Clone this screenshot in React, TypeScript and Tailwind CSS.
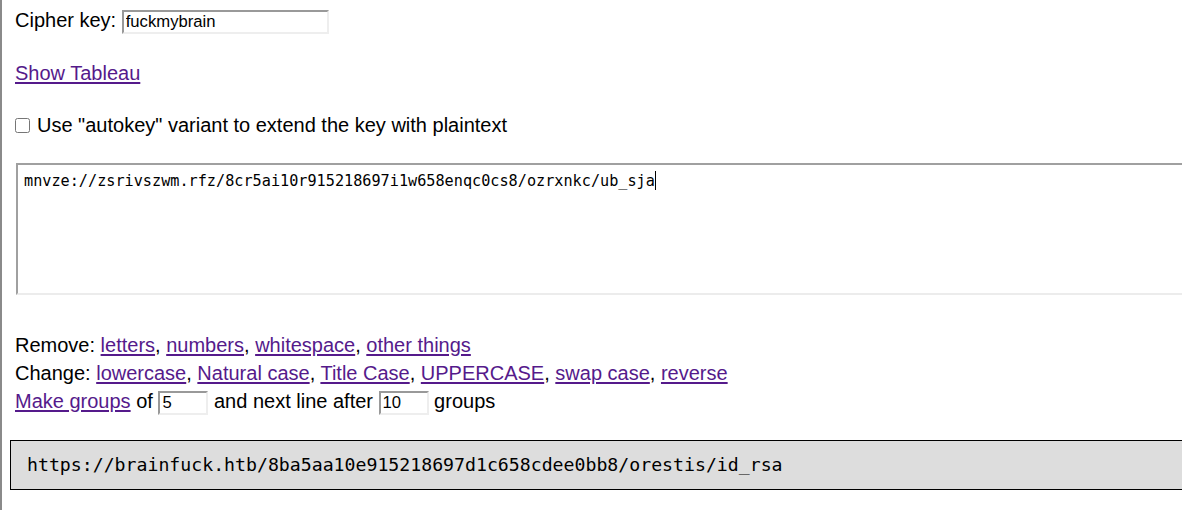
import React from "react";

const sans = "font-['Liberation_Sans',Arial,sans-serif]";
const mono = "font-['DejaVu_Sans_Mono','Liberation_Mono',monospace]";

const Lnk: React.FC<{ children: React.ReactNode }> = ({ children }) => (
  <a href="#" className="text-[#551a8b] underline underline-offset-[2px] decoration-[1.5px]">
    {children}
  </a>
);

const SmallInput: React.FC<{ value: string; width: string }> = ({ value, width }) => (
  <input
    readOnly
    value={value}
    className={`${width} h-[24px] px-[2px] align-baseline text-[16.67px] text-black bg-white border-2 border-t-[#999] border-l-[#999] border-b-[#eee] border-r-[#eee] outline-none ${sans}`}
  />
);

export default function App() {
  const removeOps = ["letters", "numbers", "whitespace", "other things"];
  const changeOps = ["lowercase", "Natural case", "Title Case", "UPPERCASE", "swap case", "reverse"];

  return (
    <div className={`h-[510px] w-full overflow-hidden bg-white border-l-2 border-[#8a8a8a] pl-[13px] text-black text-[20px] ${sans}`}>
      {/* key */}
      <div className="mt-[9px] h-[25px] leading-[23px]">
        <span>Cipher key: </span>
        <SmallInput value="fuckmybrain" width="w-[207px]" />
      </div>

      <div className="mt-[28px] h-[23px] leading-[23px]">
        <Lnk>Show Tableau</Lnk>
      </div>

      {/* autokey */}
      <div className="mt-[29px] h-[23px] flex items-center">
        <input type="checkbox" className="m-0 w-[15px] h-[15px]" />
        <span className="ml-[7px] leading-[23px]">Use "autokey" variant to extend the key with plaintext</span>
      </div>

      {/* cipher text */}
      <div
        className={`mt-[26px] ml-px w-[1200px] h-[132px] border-2 border-t-[#a0a0a0] border-l-[#a0a0a0] border-b-[#ececec] border-r-[#ececec] px-[6px] pt-[6px] text-[15.2px] leading-[20px] ${mono}`}
      >
        mnvze://zsrivszwm.rfz/8cr5ai10r915218697i1w658enqc0cs8/ozrxnkc/ub_sja
        <span className="inline-block w-px h-[19px] bg-black align-[-4px]" />
      </div>

      {/* tools */}
      <div className="mt-[36px] leading-[28px]">
        <div>
          Remove:{" "}
          {removeOps.map((op, i) => (
            <React.Fragment key={op}>
              <Lnk>{op}</Lnk>
              {i < removeOps.length - 1 ? ", " : ""}
            </React.Fragment>
          ))}
        </div>
        <div>
          Change:{" "}
          {changeOps.map((op, i) => (
            <React.Fragment key={op}>
              <Lnk>{op}</Lnk>
              {i < changeOps.length - 1 ? ", " : ""}
            </React.Fragment>
          ))}
        </div>
        <div className="h-[28px]">
          <Lnk>Make groups</Lnk> of <SmallInput value="5" width="w-[50px]" /> and next line after{" "}
          <SmallInput value="10" width="w-[50px]" /> groups
        </div>
      </div>

      {/* output */}
      <div className={`mt-[25px] -ml-[5px] w-[1200px] h-[50px] flex items-center bg-[#dddddd] border border-black pl-[16px] text-[18.2px] ${mono}`}>
        https://brainfuck.htb/8ba5aa10e915218697d1c658cdee0bb8/orestis/id_rsa
      </div>
    </div>
  );
}
